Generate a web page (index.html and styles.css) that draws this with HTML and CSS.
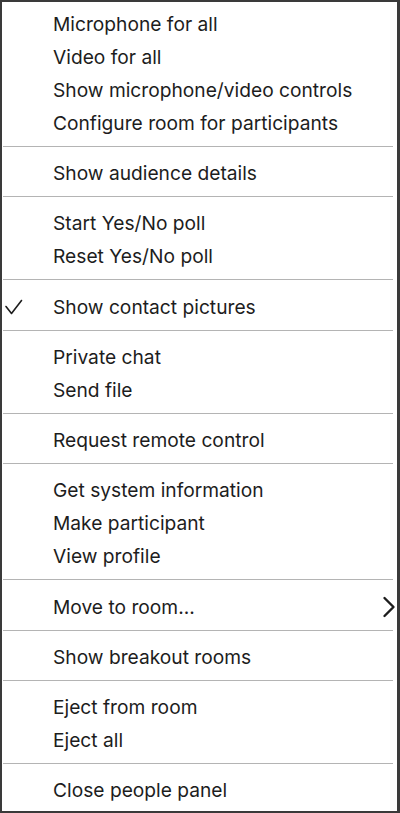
FILE: index.html
```html
<!DOCTYPE html>
<html lang="en">
<head>
<meta charset="utf-8">
<title>Menu</title>
<link rel="stylesheet" href="styles.css">
</head>
<body>
<ul class="menu">
  <li class="item"><span class="gutter"></span><span class="label">Microphone for all</span></li>
  <li class="item"><span class="gutter"></span><span class="label">Video for all</span></li>
  <li class="item"><span class="gutter"></span><span class="label">Show microphone/video controls</span></li>
  <li class="item"><span class="gutter"></span><span class="label">Configure room for participants</span></li>
  <li class="sep"></li>
  <li class="item"><span class="gutter"></span><span class="label">Show audience details</span></li>
  <li class="sep"></li>
  <li class="item"><span class="gutter"></span><span class="label">Start Yes/No poll</span></li>
  <li class="item"><span class="gutter"></span><span class="label">Reset Yes/No poll</span></li>
  <li class="sep"></li>
  <li class="item"><span class="gutter"><svg class="check" width="24" height="20" viewBox="0 0 24 20"><path d="M3 9.5 L8.5 16.5 L18.5 3.5" fill="none" stroke="#1d1d1d" stroke-width="1.6" stroke-linecap="round" stroke-linejoin="round"/></svg></span><span class="label">Show contact pictures</span></li>
  <li class="sep"></li>
  <li class="item"><span class="gutter"></span><span class="label">Private chat</span></li>
  <li class="item"><span class="gutter"></span><span class="label">Send file</span></li>
  <li class="sep"></li>
  <li class="item"><span class="gutter"></span><span class="label">Request remote control</span></li>
  <li class="sep"></li>
  <li class="item"><span class="gutter"></span><span class="label">Get system information</span></li>
  <li class="item"><span class="gutter"></span><span class="label">Make participant</span></li>
  <li class="item"><span class="gutter"></span><span class="label">View profile</span></li>
  <li class="sep"></li>
  <li class="item"><span class="gutter"></span><span class="label">Move to room...</span><svg class="chev" width="14" height="22" viewBox="0 0 14 22"><path d="M2.5 2 L11.5 11 L2.5 20" fill="none" stroke="#1d1d1d" stroke-width="2.4" stroke-linecap="round" stroke-linejoin="round"/></svg></li>
  <li class="sep"></li>
  <li class="item"><span class="gutter"></span><span class="label">Show breakout rooms</span></li>
  <li class="sep"></li>
  <li class="item"><span class="gutter"></span><span class="label">Eject from room</span></li>
  <li class="item"><span class="gutter"></span><span class="label">Eject all</span></li>
  <li class="sep"></li>
  <li class="item"><span class="gutter"></span><span class="label">Close people panel</span></li>
</ul>
</body>
</html>
```
FILE: styles.css
```css
html, body {
  margin: 0;
  padding: 0;
  background: #ffffff;
}

.menu {
  list-style: none;
  margin: 0;
  box-sizing: border-box;
  width: 400px;
  height: 813px;
  padding: 5.5px 1px 3px 0;
  border-style: solid;
  border-color: #3a3a3a;
  border-width: 2px 3px 2px 2px;
  background: #ffffff;
  font-family: Inter, "Liberation Sans", Arial, sans-serif;
  font-size: 19.2px;
  color: #1d1d1d;
  display: flex;
  flex-direction: column;
}

.item {
  display: flex;
  align-items: center;
  height: 33.15px;
  flex: 0 0 33.15px;
}

.gutter {
  flex: 0 0 51px;
  display: flex;
  align-items: center;
}

.label {
  flex: 1;
  line-height: 33px;
  white-space: nowrap;
}

.check {
  display: block;
  margin-left: 1px;
}

.chev {
  display: block;
}

.sep {
  flex: 0 0 1px;
  height: 1px;
  margin: 6px 3px 10px 1px;
  background: #b4b4b4;
}
```
